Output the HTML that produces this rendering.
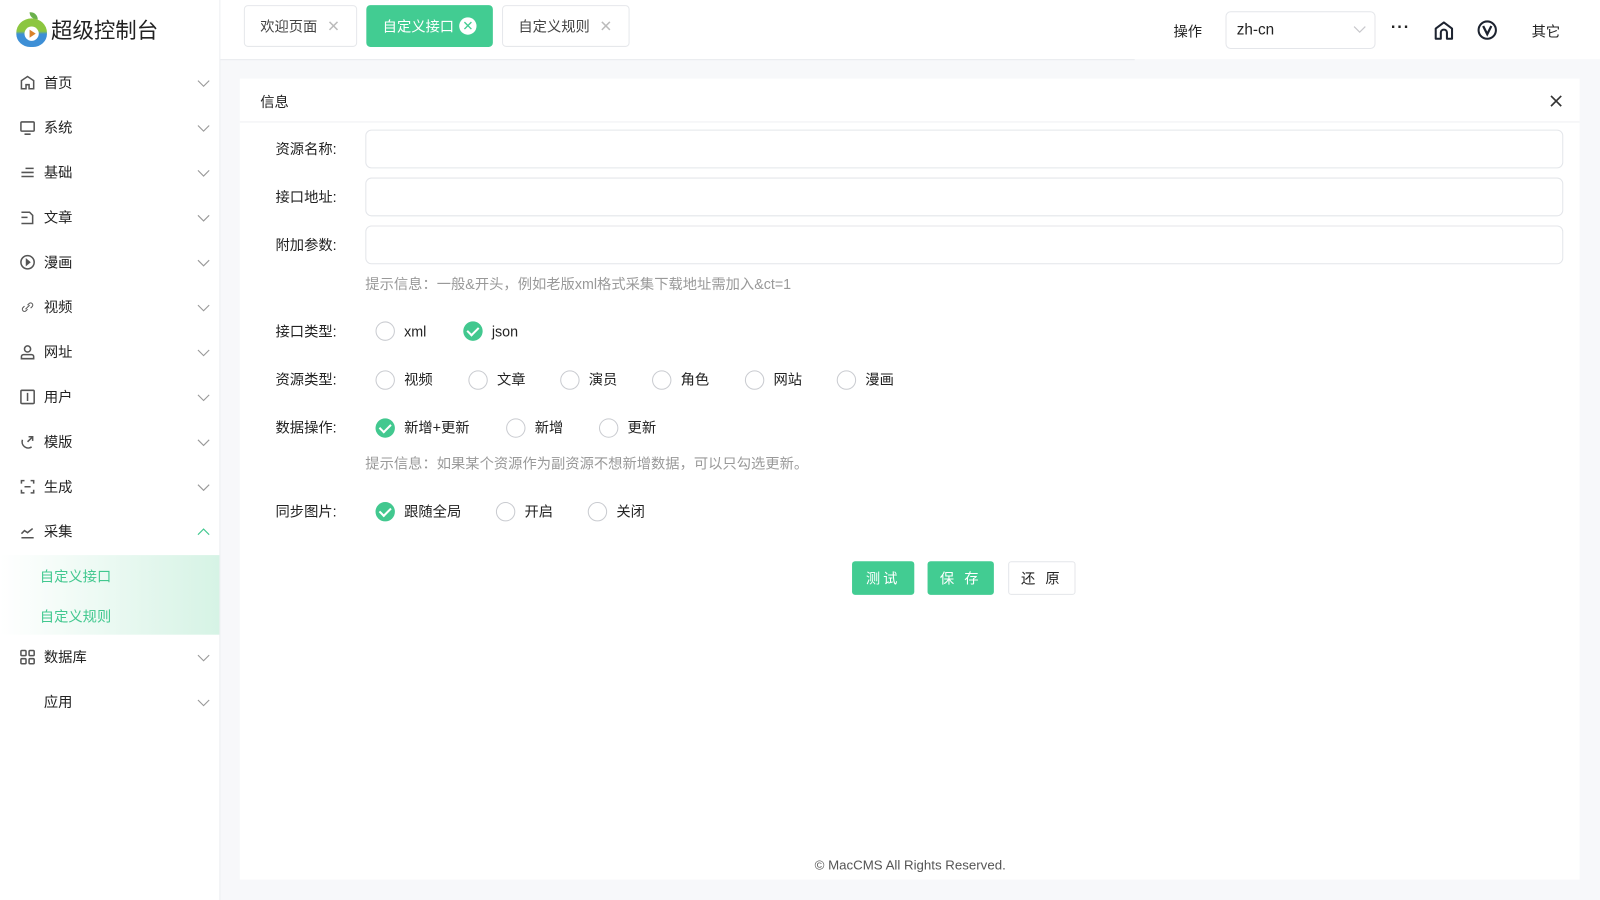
<!DOCTYPE html>
<html><head><meta charset="utf-8"><style>
*{box-sizing:border-box;margin:0;padding:0}
html,body{width:1600px;height:900px;overflow:hidden;background:#f7f8fa}
#w{position:absolute;left:0;top:0;width:1568px;height:882px;transform:scale(1.020408);transform-origin:0 0;font-family:"Liberation Sans","Noto Sans CJK SC",sans-serif;color:#222;font-size:14px}
.side{position:absolute;left:0;top:0;width:216px;height:882px;background:#fff;border-right:1px solid #ebedf0}
.logo{position:absolute;left:15px;top:12px;display:flex;align-items:center;font-size:21px;color:#222}
.apple{width:32px;height:34px;position:relative;margin-right:3px}
.apple .b{position:absolute;left:1px;top:6px;width:30px;height:28px;border-radius:50% 50% 45% 45%;background:linear-gradient(#8cc63f 45%,#3d8fd6 55%)}
.apple .p{position:absolute;left:9px;top:14px;width:14px;height:14px;border-radius:50%;background:#fff}
.apple .p:after{content:"";position:absolute;left:5px;top:3px;border-left:6px solid #d9822b;border-top:4px solid transparent;border-bottom:4px solid transparent}
.apple .l{position:absolute;left:14px;top:0;width:8px;height:7px;background:#6ab04c;border-radius:0 8px 0 8px}
.mi{position:absolute;left:0;width:215px;height:44px;display:flex;align-items:center;font-size:14px;color:#222}
.mi svg.ic{position:absolute;left:19px;width:16px;height:16px}
.mi .t{position:absolute;left:43px}
.mi svg.ar{position:absolute;left:193px;width:13px;height:13px}
.sub{position:absolute;left:0;top:544px;width:215px;height:78px;background:linear-gradient(90deg,#fff,#d6f3e5)}
.sub div{position:absolute;left:39px;color:#42c88f;font-size:14px}
.header{position:absolute;left:216px;top:0;width:1352px;height:58px;background:#fff}
.hline{position:absolute;left:216px;top:58px;width:896px;height:1px;background:#e8eaed}
.tab{position:absolute;top:5px;height:41px;border:1px solid #e6e8eb;border-radius:4px;background:#fff;font-size:14px;color:#444;display:flex;align-items:center;padding-left:15px}
.tab .x{position:absolute;right:16px;color:#bbb;font-size:15px}
.tab.on{background:#42cc92;border-color:#42cc92;color:#fff}
.tab.on .x{width:17px;height:17px;border-radius:50%;background:#fff;color:#42cc92;right:15px;font-size:13px;display:flex;align-items:center;justify-content:center}
.card{position:absolute;left:235px;top:77px;width:1313px;height:785px;background:#fff}
.chead{position:absolute;left:0;top:0;width:100%;height:43px;border-bottom:1px solid #eef0f2}
.lab{position:absolute;left:270px;font-size:14px;color:#222}
.inp{position:absolute;left:358px;width:1174px;height:38px;border:1px solid #e4e6ea;border-radius:6px;background:#fff}
.tip{position:absolute;left:358px;font-size:14px;color:#999}
.r{position:absolute;display:flex;align-items:center;font-size:14px;color:#222}
.r i{display:inline-block;width:19px;height:19px;border-radius:50%;border:1.5px solid #c9cbd0;margin-right:9px;position:relative}
.r i.c{border:none;background:#42c88f}
.r i.c:after{content:"";position:absolute;left:6px;top:3px;width:5px;height:9px;border:solid #fff;border-width:0 2px 2px 0;transform:rotate(45deg)}
.btn{position:absolute;top:550px;height:33px;border-radius:3px;display:flex;align-items:center;justify-content:center;font-size:14px;letter-spacing:3px}
.g{background:#42cc92;color:#fff}
</style></head><body><div id="w">
<div class="side">
 <div class="logo"><div class="apple"><div class="l"></div><div class="b"></div><div class="p"></div></div>超级控制台</div>
</div>
<div id="menu"></div>
<div class="sub"><div style="top:11px">自定义接口</div><div style="top:50px">自定义规则</div></div>
<div class="header"></div>
<div class="hline"></div>
<div class="tab" style="left:239px;width:111px">欢迎页面<span class="x">✕</span></div>
<div class="tab on" style="left:359px;width:124px">自定义接口<span class="x">✕</span></div>
<div class="tab" style="left:492px;width:125px">自定义规则<span class="x">✕</span></div>
<div style="position:absolute;left:1150px;top:21px;font-size:14px">操作</div>
<div style="position:absolute;left:1201px;top:11px;width:147px;height:37px;border:1px solid #e4e6ea;border-radius:5px;background:#fff;font-size:15px;padding:9px 0 0 10px">zh-cn
<svg style="position:absolute;right:8px;top:12px" width="13" height="10" viewBox="0 0 13 10"><path d="M1 2l5.5 5.5L12 2" fill="none" stroke="#c8c8cc" stroke-width="1.2"/></svg></div>
<div style="position:absolute;left:1363px;top:19px;font-size:16px;font-weight:bold;letter-spacing:1px">···</div>
<svg style="position:absolute;left:1405px;top:20px" width="20" height="20" viewBox="0 0 20 20"><path d="M2 18V8l8-6 8 6v10H13v-6a3 3 0 0 0-6 0v6z" fill="none" stroke="#1d2330" stroke-width="2" stroke-linejoin="round"/></svg>
<svg style="position:absolute;left:1447px;top:19px" width="21" height="21" viewBox="0 0 21 21"><circle cx="10.5" cy="10.5" r="8.5" fill="none" stroke="#1d2330" stroke-width="2"/><path d="M6.5 6.5l4 8 4-8" fill="none" stroke="#1d2330" stroke-width="2.2"/></svg>
<div style="position:absolute;left:1501px;top:21px;font-size:14px">其它</div>
<div class="card"><div class="chead"><div style="position:absolute;left:20px;top:13px;font-size:14px">信息</div>
<svg style="position:absolute;left:1284px;top:16px" width="12" height="12" viewBox="0 0 12 12"><path d="M1 1l10 10M11 1L1 11" stroke="#333" stroke-width="1.6"/></svg></div></div>
<div class="lab" style="top:136px">资源名称:</div><div class="inp" style="top:127px"></div>
<div class="lab" style="top:183px">接口地址:</div><div class="inp" style="top:174px"></div>
<div class="lab" style="top:230px">附加参数:</div><div class="inp" style="top:221px"></div>
<div class="tip" style="top:268px">提示信息：一般&amp;开头，例如老版xml格式采集下载地址需加入&amp;ct=1</div>
<div class="lab" style="top:315px">接口类型:</div>
<div class="r" style="left:368px;top:315px"><i></i>xml</div>
<div class="r" style="left:454px;top:315px"><i class="c"></i>json</div>
<div class="lab" style="top:362px">资源类型:</div>
<div class="r" style="left:368px;top:362px"><i></i>视频</div>
<div class="r" style="left:459px;top:362px"><i></i>文章</div>
<div class="r" style="left:549px;top:362px"><i></i>演员</div>
<div class="r" style="left:639px;top:362px"><i></i>角色</div>
<div class="r" style="left:730px;top:362px"><i></i>网站</div>
<div class="r" style="left:820px;top:362px"><i></i>漫画</div>
<div class="lab" style="top:409px">数据操作:</div>
<div class="r" style="left:368px;top:409px"><i class="c"></i>新增+更新</div>
<div class="r" style="left:496px;top:409px"><i></i>新增</div>
<div class="r" style="left:587px;top:409px"><i></i>更新</div>
<div class="tip" style="top:444px">提示信息：如果某个资源作为副资源不想新增数据，可以只勾选更新。</div>
<div class="lab" style="top:491px">同步图片:</div>
<div class="r" style="left:368px;top:491px"><i class="c"></i>跟随全局</div>
<div class="r" style="left:486px;top:491px"><i></i>开启</div>
<div class="r" style="left:576px;top:491px"><i></i>关闭</div>
<div class="btn g" style="left:835px;width:61px">测试</div>
<div class="btn g" style="left:909px;width:65px">保 存</div>
<div class="btn" style="left:988px;width:66px;border:1px solid #e4e6ea;background:#fff;color:#222">还 原</div>
<div style="position:absolute;left:0;width:1784px;top:840px;text-align:center;font-size:13px;color:#555">© MacCMS All Rights Reserved.</div>
</div>
<script>
var items=[["首页",81,'<path d="M2 14V6l6-4 6 4v8H9.5v-4h-3v4z"/>'],["系统",125,'<rect x="1.5" y="2.5" width="13" height="9" rx="1"/><path d="M5 14.5h6"/>'],["基础",169,'<path d="M6 4h8M2 8h12M2 12h12"/>'],["文章",213,'<path d="M2 3h8l3 3v8H2M2 8h6"/>'],["漫画",257,'<circle cx="8" cy="8" r="6.5"/><path d="M7 5.5v5l3-2.5z" fill="#555"/>'],["视频",301,'<path d="M6 10l4-4M5 7l-1.5 1.5a2 2 0 0 0 3 3L8 10M11 9l1.5-1.5a2 2 0 0 0-3-3L8 6" stroke-width="1"/>'],["网址",345,'<circle cx="8" cy="5" r="3"/><path d="M2 14.5v-2a2 2 0 0 1 2-2h8a2 2 0 0 1 2 2v2z"/>'],["用户",389,'<rect x="1.5" y="1.5" width="13" height="13" rx="1"/><path d="M8 4v8"/>'],["模版",433,'<path d="M3 6a6 6 0 0 0 9 7M8 8l5-5M9 3h4v4"/>'],["生成",477,'<path d="M2 5V2h3M11 2h3v3M14 11v3h-3M5 14H2v-3M5 8h6"/>'],["采集",521,'<path d="M2 14h12M2 10l3-3 3 2 5-4"/>'],["数据库",644,'<rect x="1.5" y="1.5" width="5" height="5" rx="1"/><rect x="9.5" y="1.5" width="5" height="5" rx="1"/><rect x="1.5" y="9.5" width="5" height="5" rx="1"/><rect x="9.5" y="9.5" width="5" height="5" rx="1"/>'],["应用",688,'']];
var h='';items.forEach(function(it){var up=it[0]=="采集";
h+='<div class="mi" style="top:'+(it[1]-22)+'px"><svg class="ic" viewBox="0 0 16 16" fill="none" stroke="#555" stroke-width="1.5">'+it[2]+'</svg><span class="t">'+it[0]+'</span><svg class="ar" viewBox="0 0 13 13"><path d="'+(up?'M1 9l5.5-5.5L12 9':'M1 4l5.5 5.5L12 4')+'" fill="none" stroke="'+(up?'#42c88f':'#999')+'" stroke-width="1.1"/></svg></div>';});
document.getElementById('menu').innerHTML=h;
</script>
</body></html>
